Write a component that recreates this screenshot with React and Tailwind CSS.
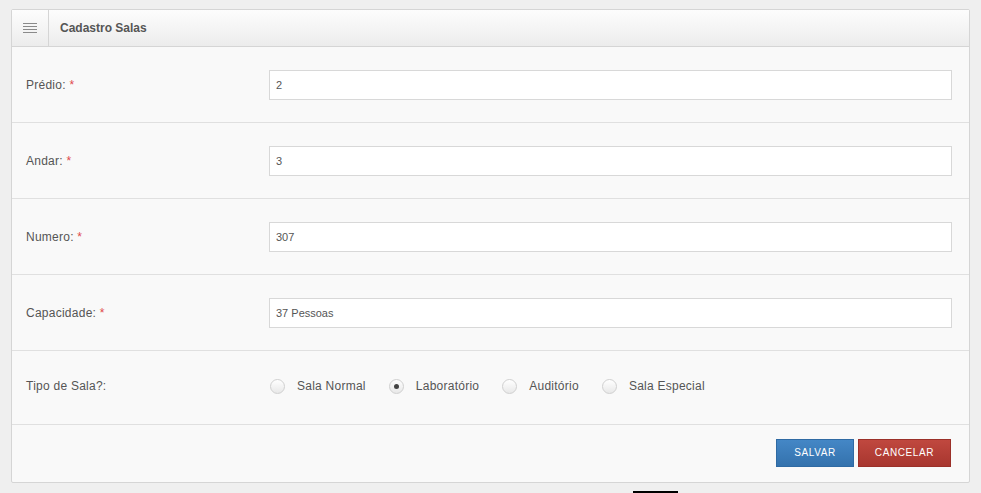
import React, { useState } from 'react';

const rows = [
    { label: 'Prédio:', value: '2' },
    { label: 'Andar:', value: '3' },
    { label: 'Numero:', value: '307' },
    { label: 'Capacidade:', value: '37 Pessoas' },
];

const tipos = ['Sala Normal', 'Laboratório', 'Auditório', 'Sala Especial'];

function Radio({ checked, label, onClick }) {
    return (
        <label onClick={onClick} className="flex items-center cursor-pointer mr-[23px]">
            <span className="w-[15px] h-[15px] rounded-full border border-[#d0d0d0] bg-gradient-to-b from-[#ffffff] to-[#e8e8e8] flex items-center justify-center">
                {checked && <span className="w-[5px] h-[5px] rounded-full bg-[#444]" />}
            </span>
            <span className="ml-[12px] text-[12px] tracking-[0.25px] text-[#555]">{label}</span>
        </label>
    );
}

export default function App() {
    const [tipo, setTipo] = useState('Laboratório');

    return (
        <div className="relative w-[981px] h-[493px] bg-[#efefef] pt-[9px] pl-[11px] overflow-hidden" style={{ fontFamily: '"Liberation Sans", Arial, sans-serif' }}>
            <div className="w-[959px] h-[474px] border border-[#d5d5d5] bg-[#f9f9f9] rounded-[2px] flex flex-col">
                <div className="h-[37px] flex items-stretch border-b border-[#d5d5d5] bg-gradient-to-b from-[#fdfdfd] to-[#ececec]">
                    <div className="w-[37px] border-r border-[#d5d5d5] flex items-center justify-center">
                        <div className="flex flex-col gap-[2px]">
                            <span className="block w-[14px] h-px bg-[#8a8a8a]" />
                            <span className="block w-[14px] h-px bg-[#8a8a8a]" />
                            <span className="block w-[14px] h-px bg-[#8a8a8a]" />
                            <span className="block w-[14px] h-px bg-[#8a8a8a]" />
                        </div>
                    </div>
                    <div className="flex items-center pl-[11px] text-[12px] font-bold text-[#555]">Cadastro Salas</div>
                </div>

                {rows.map(r => (
                    <div key={r.label} className="h-[76px] flex items-center border-b border-[#e0e0e0] pl-[14px] pr-[17px]">
                        <div className="w-[243px] text-[12px] tracking-[0.25px] text-[#555]">
                            {r.label} <span className="text-[#e0494b]">*</span>
                        </div>
                        <input
                            defaultValue={r.value}
                            className="flex-1 h-[30px] bg-white border border-[#d8d8d8] px-[6px] text-[11px] text-[#555] outline-none"
                        />
                    </div>
                ))}

                <div className="h-[74px] flex items-center border-b border-[#e0e0e0] pl-[14px] pr-[17px] pb-[3px]">
                    <div className="w-[244px] text-[12px] tracking-[0.25px] text-[#555]">Tipo de Sala?:</div>
                    <div className="flex items-center">
                        {tipos.map(t => (
                            <Radio key={t} label={t} checked={tipo === t} onClick={() => setTipo(t)} />
                        ))}
                    </div>
                </div>

                <div className="flex-1 flex items-center justify-end gap-[4px] pr-[18px] pb-[2px]">
                    <button className="w-[78px] h-[28px] bg-gradient-to-b from-[#4487c6] to-[#3472ad] border border-[#2f6aa3] text-white text-[10px] tracking-[0.6px]">
                        SALVAR
                    </button>
                    <button className="w-[93px] h-[28px] bg-gradient-to-b from-[#c0483f] to-[#a8362f] border border-[#9b3029] text-white text-[10px] tracking-[0.6px]">
                        CANCELAR
                    </button>
                </div>
            </div>
            <div className="absolute left-[633px] top-[491px] w-[45px] h-[2px] bg-black" />
        </div>
    );
}
